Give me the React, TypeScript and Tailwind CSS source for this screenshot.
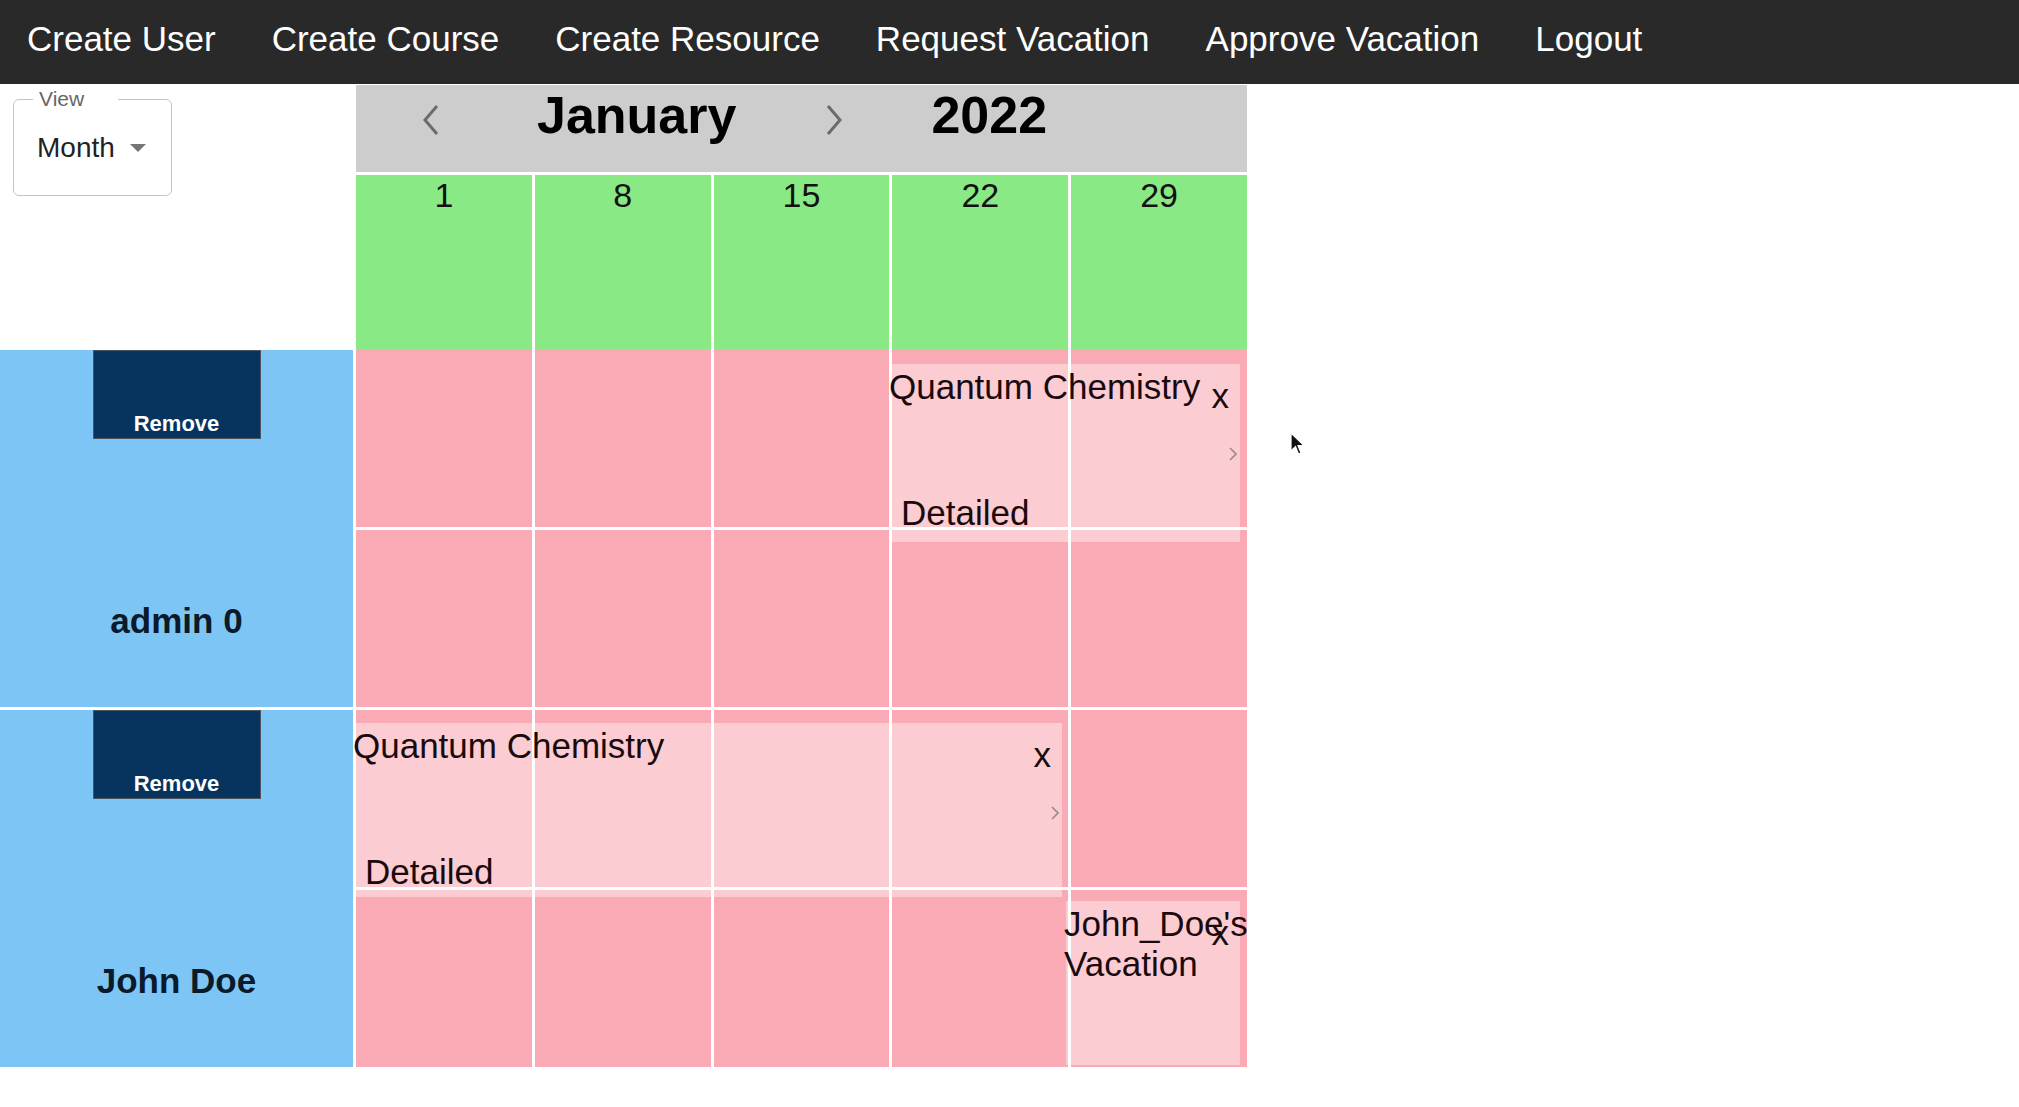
import React from 'react'

const navItems = [
	'Create User',
	'Create Course',
	'Create Resource',
	'Request Vacation',
	'Approve Vacation',
	'Logout',
]

const days = [1, 8, 15, 22, 29]

type CalEvent = {
	title: string
	box: string
	detailed?: boolean
}

type Row = {
	name: string
	events: CalEvent[]
}

const rows: Row[] = [
	{
		name: 'admin 0',
		events: [
			{
				title: 'Quantum Chemistry',
				box: 'left-[535px] top-[14px] w-[349px] h-[178px]',
				detailed: true,
			},
		],
	},
	{
		name: 'John Doe',
		events: [
			{
				title: 'Quantum Chemistry',
				box: 'left-[-1px] top-[13px] w-[707px] h-[174px]',
				detailed: true,
			},
			{
				title: "John_Doe's Vacation",
				box: 'left-[710px] top-[191px] w-[174px] h-[164px]',
			},
		],
	},
]

function Chevron({ dir }: { dir: 'left' | 'right' }) {
	return (
		<svg width="22" height="34" viewBox="0 0 22 34" className="mt-[14px]">
			<path
				d={dir === 'left' ? 'M17 3 L5 17 L17 31' : 'M5 3 L17 17 L5 31'}
				fill="none"
				stroke="#6b6b6b"
				strokeWidth="3"
			/>
		</svg>
	)
}

function EventBox({ ev }: { ev: CalEvent }) {
	return (
		<div className={`absolute ${ev.box} bg-white/40`}>
			<div className="ml-[-2px] pt-[3px] pr-[30px] text-[35px] leading-[40px] text-[#1a0a0e]">
				{ev.title}
			</div>
			{/* delete */}
			<span className="absolute right-[11px] top-[12px] text-[35px] leading-[40px] text-[#1a0a0e]">
				x
			</span>
			{ev.detailed && (
				<>
					<svg
						width="8"
						height="14"
						viewBox="0 0 8 14"
						className="absolute right-[3px] top-[83px]">
						<path d="M1 1 L7 7 L1 13" fill="none" stroke="#9a8a8e" strokeWidth="1.6" />
					</svg>
					<div className="absolute left-[10px] top-[129px] text-[35px] leading-[40px] text-[#1a0a0e]">
						Detailed
					</div>
				</>
			)}
		</div>
	)
}

export default function App() {
	return (
		<div className="relative min-h-screen bg-white font-['Liberation_Sans',Arial,sans-serif]">
			{/* Top nav */}
			<nav className="h-[84px] bg-[#292929] flex items-center gap-[56px] pl-[27px] pb-[8px]">
				{navItems.map((item) => (
					<span key={item} className="text-white text-[35px] leading-none whitespace-nowrap">
						{item}
					</span>
				))}
			</nav>

			{/* Header */}
			<div className="flex">
				<div className="w-[353px] h-[266px] pt-[15px] pl-[13px]">
					<div className="relative w-[159px] h-[97px] border border-[#c4c4c4] rounded-[6px] flex items-center pl-[23px] gap-[15px]">
						<span className="absolute left-[19px] top-[-13px] bg-white pl-[6px] pr-[34px] text-[21px] leading-[24px] text-[#666]">
							View
						</span>
						<span className="text-[28px] leading-none text-[#222]">Month</span>
						<svg width="16" height="8" viewBox="0 0 16 8">
							<polygon points="0,0 16,0 8,8" fill="#757575" />
						</svg>
					</div>
				</div>
				<div className="ml-[3px] w-[891px] flex flex-col">
					<div className="mt-[1px] h-[87px] bg-[#cdcdcd] flex items-start pt-[4px] pl-[64px]">
						<Chevron dir="left" />
						<span className="ml-[95px] text-[52px] leading-none font-bold text-black">January</span>
						<span className="ml-[87px]">
							<Chevron dir="right" />
						</span>
						<span className="ml-[86px] text-[52px] leading-none font-bold text-black">2022</span>
					</div>
					<div className="mt-[3px] grid grid-cols-5 gap-[3px] h-[175px]">
						{days.map((d) => (
							<div key={d} className="bg-[#88e985] text-center text-[34px] leading-[40px] text-[#111]">
								{d}
							</div>
						))}
					</div>
				</div>
			</div>

			{/* Resource rows */}
			<div className="flex flex-col gap-[3px]">
				{rows.map((row) => (
					<div key={row.name} className="flex h-[357px]">
						<div className="w-[353px] bg-[#7dc5f5] flex flex-col">
							<div className="h-[178px] flex justify-center">
								<button className="w-[168px] h-[89px] bg-[#06345f] border border-[#4a5560] pt-[58px] text-white text-[22px] leading-[26px] font-bold self-start">
									Remove
								</button>
							</div>
							<div className="flex-1 flex items-center justify-center pt-[8px] text-[35px] font-bold text-[#0b1a2a]">
								{row.name}
							</div>
						</div>
						<div className="relative ml-[3px] w-[891px] grid grid-cols-5 grid-rows-2 gap-[3px]">
							{Array.from({ length: 10 }).map((_, i) => (
								<div key={i} className="bg-[#f9aab5]" />
							))}
							{row.events.map((ev) => (
								<EventBox key={ev.title + ev.box} ev={ev} />
							))}
						</div>
					</div>
				))}
			</div>

			{/* mouse pointer */}
			<svg
				width="16"
				height="24"
				viewBox="0 0 16 24"
				className="absolute left-[1290px] top-[432px]">
				<path
					d="M1 1 L1 19 L5.5 14.5 L8.5 22 L11 21 L8 13.5 L14 13.5 Z"
					fill="#111"
					stroke="#fff"
					strokeWidth="1.2"
				/>
			</svg>
		</div>
	)
}
